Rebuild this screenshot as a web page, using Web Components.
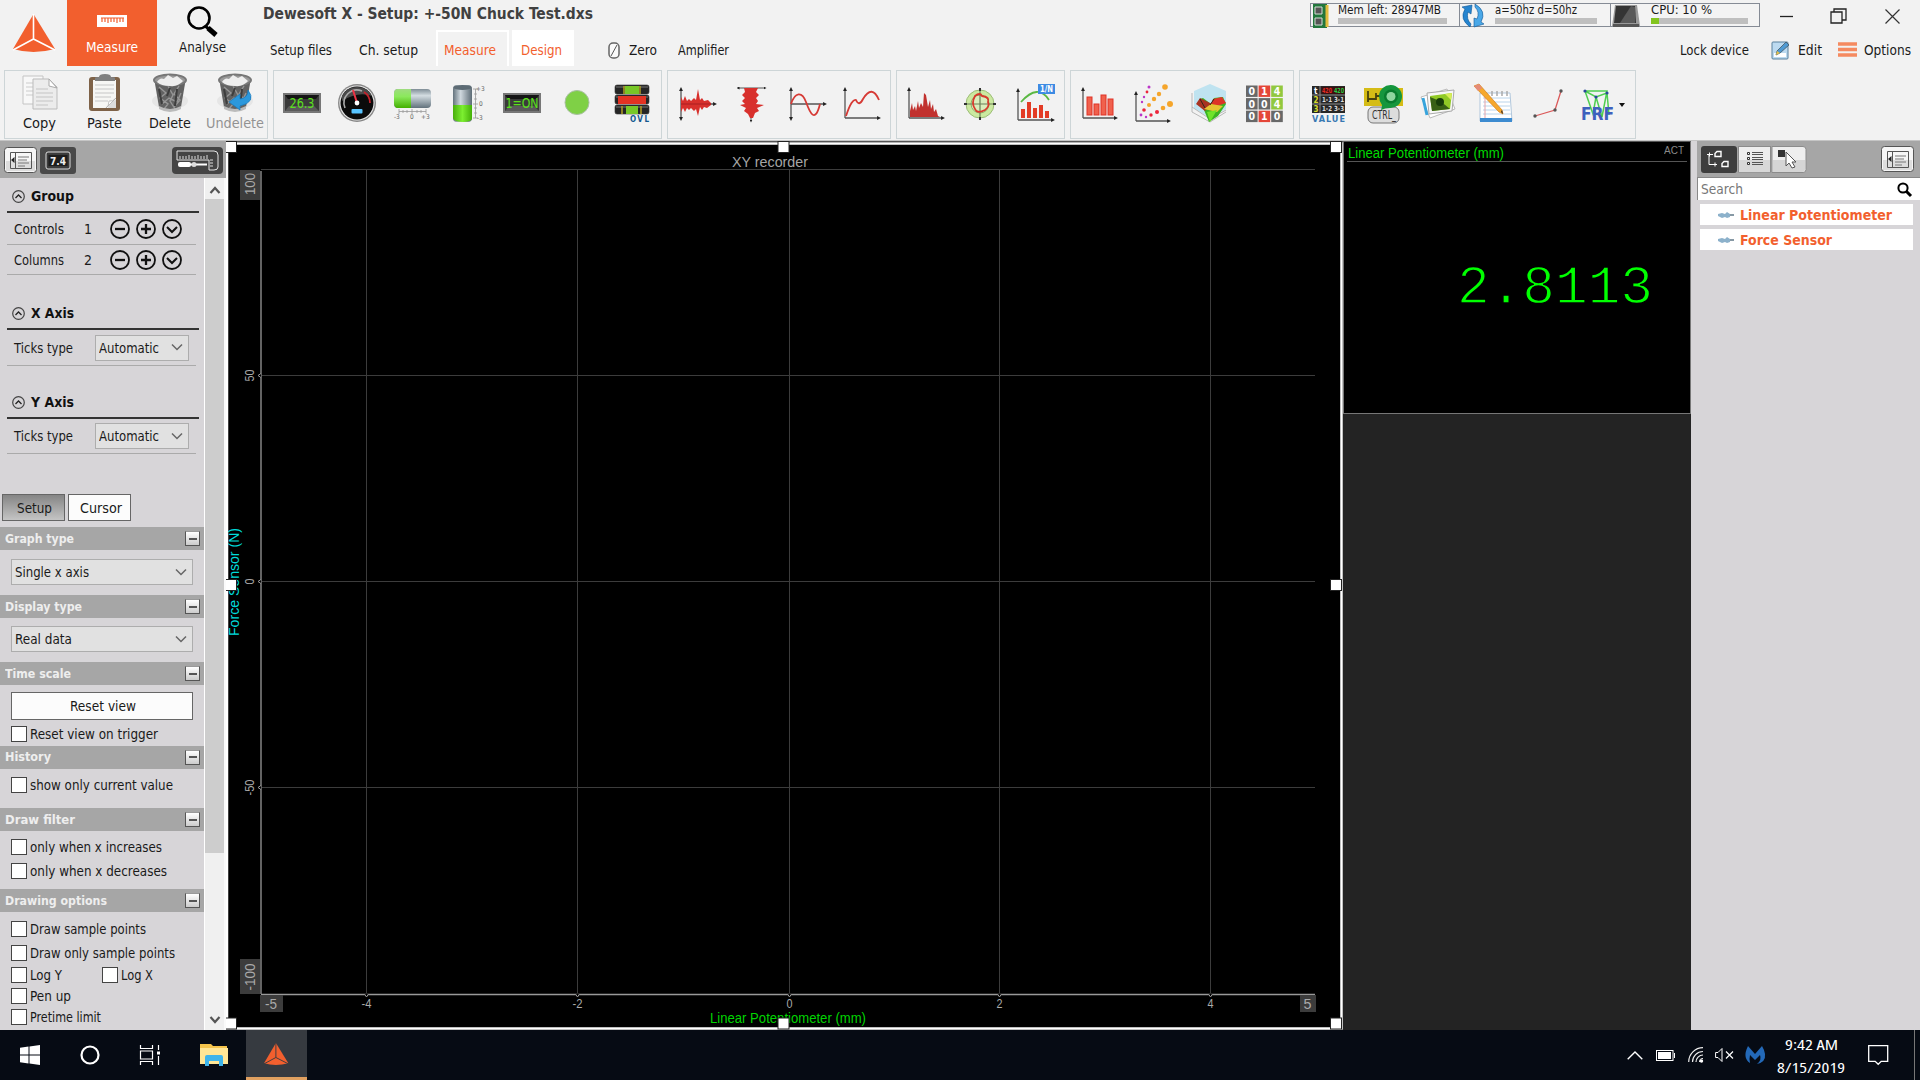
<!DOCTYPE html>
<html lang="en"><head><meta charset="utf-8"><title>Dewesoft X</title>
<style>
html,body{margin:0;width:1920px;height:1080px;overflow:hidden;background:#f2f2f2}
body{font:14px/16px "DejaVu Sans Condensed","DejaVu Sans",sans-serif;font-stretch:condensed;color:#1a1a1a}
dw-app{--orange:#f25f2e;--panel:#d7d5d8;--bar:#a6a6a6}
</style></head><body><dw-app></dw-app>
<script>
const arrow='<marker id="m" markerWidth="3" markerHeight="3" refX="1.5" refY="1.5" orient="auto-start-reverse"><path d="M0 0L3 1.5L0 3z" fill="#222"/></marker>';
const axes=(x,y1,y2,x2,mid)=>`<defs>${arrow}</defs><path d="M${x} ${y2}V${y1}" stroke="#555" stroke-width="1.3" marker-end="url(#m)"${mid?' marker-start="url(#m)"':''}/><path d="M${x} ${mid||y2}H${x2}" stroke="#555" stroke-width="1.3" marker-end="url(#m)"/>`;
const trash='<ellipse cx="20" cy="28" rx="18" ry="8" fill="#e6e6e6"/><path d="M4 5L9 34Q20 40 31 34L36 5z" fill="#626262"/><path d="M9 14l7 6-6 5 8 6-4 5M18 13l5 9-3 6 5 8M29 13l-5 8 6 6-6 7M12 31l7-6 8 4 4-9" stroke="#969696" fill="none" stroke-width="1.4"/><path d="M9 16l3 15M27 16l-2 17M20 15l-3 8" stroke="#3d3d3d" fill="none" stroke-width="2"/><ellipse cx="20" cy="7" rx="16" ry="5.5" fill="#999" stroke="#777" stroke-width="2"/><path d="M7 9q3-5 7-3l4-4 5 3 4-2 6 5q-5 6-13 5-9 0-13-4z" fill="#eee"/><path d="M9 33q11 6 22 0v3q-11 6-22 0z" fill="#bbb"/>';
const lcd=(t)=>`<rect x="3" y="12" width="38" height="20" fill="#3a3a3a"/><rect x="4" y="13" width="36" height="18" fill="none" stroke="#777" stroke-width="2"/><path d="M5 14h34l-3 4H8z" fill="#151515"/><path d="M5 30h34l-5-5H9z" fill="#5a5a5a"/><text x="22" y="27" text-anchor="middle" font-size="14" textLength="${t=='1=ON'?33:25}" lengthAdjust="spacingAndGlyphs" fill="#5be01c">${t}</text>`;
const grad='<linearGradient id="g1" x2="0" y2="1"><stop stop-color="#7f8d96"/><stop offset=".35" stop-color="#d4dde2"/><stop offset="1" stop-color="#61717c"/></linearGradient><linearGradient id="g2" x2="0" y2="1"><stop stop-color="#9fdc80"/><stop offset=".4" stop-color="#8be95c"/><stop offset="1" stop-color="#43b000"/></linearGradient><linearGradient id="g3"><stop stop-color="#64737d"/><stop offset=".4" stop-color="#cfd8de"/><stop offset="1" stop-color="#5d6c76"/></linearGradient><linearGradient id="g4"><stop stop-color="#49ae0c"/><stop offset=".5" stop-color="#7cef30"/><stop offset="1" stop-color="#45b008"/></linearGradient>';
const cells=()=>{const v='014004010';let s='';[...v].forEach((c,i)=>{const x=4+i%3*12.6,y=4.5+(i/3|0)*12.6,f=c=='0'?'#686868':c=='1'?'#e44638':'#92c83e';s+=`<rect x="${x}" y="${y}" width="11.6" height="11.4" fill="${f}"/><text x="${x+5.8}" y="${y+9.7}" text-anchor="middle" font-size="10.5" font-weight="bold" fill="#fff">${c}</text>`});return s};
const logo='<path d="M20.5 0L0 35Q20 41 42 35z" fill="#f25f2e"/><path d="M20.5 0V25L0 36M20.5 25L42 36" stroke="currentColor" fill="none" stroke-width="1.6"/>';
const I={
logo:[42,39,logo],
logoSmall:[42,39,logo],
ruler:[30,12,'<rect width="30" height="12" fill="#fff"/><path d="M5 3v4M8 3v4M11 3v5M14 3v4M17 3v4M20 3v5M23 3v4M26 3v4M4 3h23" stroke="#f25f2e" stroke-width="1.2"/>'],
lens:[32,32,'<circle cx="13" cy="12" r="10.5" fill="none" stroke="#000" stroke-width="2.6"/><path d="M19 20l4 3" stroke="#000" stroke-width="3"/><path d="M22 22l8 7" stroke="#000" stroke-width="5"/>'],
zero:[13,18,'<rect x="1" y="1" width="10" height="15" rx="4" fill="#fafafa" stroke="#666" stroke-width="1.5"/><path d="M9 3L3 14" stroke="#555"/>'],
copy:[36,36,'<path d="M1 1h20v4H14v24H1z" fill="#f8f8f8" stroke="#c4c4c4"/><path d="M4 8h9M4 12h9M4 16h9M4 20h9" stroke="#ccc"/><path d="M11 4h16l8 8v22H11z" fill="#ececec" stroke="#bbb"/><path d="M27 4l8 9-8-2z" fill="#fff" stroke="#aaa"/><path d="M14 14h12M14 18h17M14 22h17M14 26h17M14 30h12" stroke="#c4c4c4"/>'],
paste:[34,38,'<rect x="1" y="3" width="31" height="34" rx="3" fill="#7e6248"/><rect x="5" y="6" width="23" height="28" fill="#f6f6f4"/><path d="M7 11h19M7 15h19M7 19h19M7 23h16M7 27h13" stroke="#c6c6c6"/><path d="M20 34q0-7 8-8v8z" fill="#ddd"/><path d="M18 34q3-2 3-7 4 1 7-3z" fill="#fff" stroke="#aaa" stroke-width=".7"/><path d="M7 7V4q0-1 4-1 0-3 6-3t6 3q4 0 4 1v3z" fill="#808080"/>'],
trash:[40,39,trash],
untrash:[40,39,trash+'<path d="M33 17q9 12-8 16v4L14 29l11-8v5q8-1 8-9z" fill="#2b98dc" stroke="#1679bd" stroke-width=".7"/>'],
lcd:[44,44,lcd('26.3')],
on:[44,44,lcd('1=ON')],
gauge:[44,44,'<circle cx="22" cy="22" r="19" fill="#888"/><circle cx="22" cy="22" r="17.6" fill="#e9e9e9"/><circle cx="22" cy="22" r="16.5" fill="#0b0b0b"/><path d="M7 15A17 17 0 0 1 37 15Q23 10 7 20z" fill="#4a4a4a"/><path d="M10 27A13 13 0 0 1 27 10" fill="none" stroke="#aaa" stroke-width="1.6"/><path d="M29 11A13 13 0 0 1 35 22" fill="none" stroke="#c2222c" stroke-width="1.8"/><path d="M18 9L22 22" stroke="#e34" stroke-width="2"/><circle cx="22" cy="22" r="2.4" fill="#fff"/><rect x="16.500" y="28" width="11" height="4.600" rx="1" fill="#58c4ff"/>'],
hbar:[44,44,`<defs>${grad}</defs><rect x="4" y="8" width="37" height="19" rx="4" fill="url(#g1)"/><path d="M8 8h13v19H8q-4 0-4-5v-9q0-5 4-5z" fill="url(#g2)"/><path d="M9 30.500h27M9 28v5M13 29v3M17 29v3M22 28v5M27 29v3M31 29v3M36 28v5" stroke="#999" stroke-width=".8"/><text x="4" y="38" font-size="6.500" fill="#666">-3</text><text x="20" y="38" font-size="6.500" fill="#666">0</text><text x="31" y="38" font-size="6.500" fill="#666">+3</text>`],
vbar:[44,44,`<defs>${grad}</defs><rect x="8" y="4" width="19" height="37" rx="4" fill="url(#g3)"/><path d="M8 24h19v13q0 4-9 4t-10-4z" fill="url(#g4)"/><ellipse cx="17.500" cy="6.500" rx="9" ry="2.500" fill="#5d6b74"/><path d="M30.500 8v29M28 8h5M29 13h3M29 18h3M28 23h5M29 27h3M29 32h3M28 37h5" stroke="#999" stroke-width=".8"/><g font-size="6.500" fill="#666"><text x="31" y="10">+3</text><text x="34" y="25">0</text><text x="32" y="39">-3</text></g>`],
lamp:[44,44,'<circle cx="22" cy="21.500" r="12" fill="#7fd046" stroke="#a9bfa3"/>'],
ovl:[44,44,'<g stroke="#333" stroke-width=".6"><rect x="5" y="4" width="34" height="9" rx="2" fill="#252525"/><rect x="5" y="14" width="34" height="9" rx="2" fill="#252525"/><rect x="5" y="24" width="34" height="9" rx="2" fill="#252525"/></g><path d="M6 6h32M6 16h32M6 26h32" stroke="#777"/><rect x="15" y="5" width="14" height="8" fill="#78c727"/><rect x="8" y="15" width="28" height="8" fill="#e33323"/><rect x="16" y="25" width="12" height="8" fill="#78c727"/><path d="M14 5v8M30 5v8M12 25v8M31 25v8" stroke="#b29e25" stroke-width="1.5"/><text x="20" y="41" font-size="8" font-weight="bold" textLength="19" fill="#14588f">OVL</text>'],
wave:[44,44,axes(7,8,38,41,23)+'<path d="M7 16L9 20L11 15L13 20L15 18L17 20L20 17L22 19L24 8L26 19L28 17L30 20L34 19L37 22L37 24L33 27L30 26L28 29L26 26L24 35L22 28L20 30L17 27L15 29L13 27L11 31L9 27L7 31z" fill="#d8302c"/><path d="M7 23H37" stroke="#a91f21"/>'],
vwave:[44,44,'<defs>'+arrow+'</defs><path d="M9 7H36" stroke="#555" marker-start="url(#m)" marker-end="url(#m)"/><path d="M22 7V40" stroke="#555" marker-end="url(#m)"/><path d="M15 7h14l-2 4 3 3-3 3 2 3-2 3 8 1-7 3 2 3-4 2-2 5h-3l-2-4-4-3 2-3-6-3 5-1-3-3 3-3-3-3 3-3z" fill="#d8302c"/>'],
sine:[44,44,axes(7,8,38,41,23)+'<path d="M7 23C11 11 18 10 22 21S31 43 36 23" fill="none" stroke="#d63a35" stroke-width="1.8"/>'],
curve:[44,44,axes(6,8,37,40)+'<path d="M7 35Q13 17 17 19Q20 26 24 18Q33 3 40 19" fill="none" stroke="#d63a35" stroke-width="1.8"/>'],
fft:[44,44,axes(6,8,37,40)+'<path d="M7 36V30L9 22L10 29L12 25L13 30L15 20L16 27L18 22L20 26L21 12L23 14L25 26L27 19L28 28L30 23L31 31L33 28L35 35L37 36z" fill="#c1312e"/>'],
orbit:[44,44,'<circle cx="22" cy="23" r="14" fill="#cbe9a0" stroke="#9cbd78"/><circle cx="22" cy="23" r="9" fill="#daedbc" stroke="#8eac6b"/><path d="M22 8v30M7 23h30" stroke="#6c8058" stroke-width="1.200"/><path d="M17 15q5-4 7 0 8 1 6 6 2 4-3 8-8 4-10-1-4-6 0-13z" fill="none" stroke="#d73a2c" stroke-width="1.800"/><path d="M22 7v3M22 36v3M6 23h3M35 23h3" stroke="#333" stroke-width="2"/>'],
octave:[44,44,axes(5,9,39,40)+'<path d="M8 21Q25 2 36 19" fill="none" stroke="#5ab842" stroke-width="1.800"/><g fill="#e33c25"><rect x="8" y="28" width="4" height="9"/><rect x="14" y="21" width="4" height="16"/><rect x="20" y="27" width="4" height="10"/><rect x="26" y="24" width="4" height="13"/><rect x="32" y="30" width="4" height="7"/></g><rect x="25" y="3" width="17" height="10" fill="#3d8be3"/><text x="33.500" y="11" text-anchor="middle" font-size="8" font-weight="bold" textLength="13" lengthAdjust="spacingAndGlyphs" fill="#fff">1/N</text>'],
bars:[44,44,axes(6,8,37,39)+'<g fill="#f0614d" stroke="#df3327"><rect x="10" y="16" width="5" height="18"/><rect x="17" y="23" width="5" height="11"/><rect x="24" y="14" width="5" height="20"/><rect x="31" y="18" width="5" height="16"/></g>'],
scatter:[44,44,axes(4,12,40,37)+'<g fill="#f5a52b"><circle cx="33" cy="6" r="2.800"/><circle cx="27" cy="13" r="2.200"/><circle cx="22" cy="18" r="2.200"/><circle cx="17" cy="24" r="2"/><circle cx="38" cy="23" r="3"/><circle cx="31" cy="27" r="2.300"/></g><g fill="#ec263c"><circle cx="25" cy="31" r="2"/><circle cx="19" cy="34" r="1.700"/><circle cx="12" cy="29" r="1.800"/><circle cx="15" cy="11" r="1.400"/></g><g fill="#bc36c9"><circle cx="17" cy="6" r="1.500"/><circle cx="12" cy="16" r="1.200"/><circle cx="10" cy="21" r="1.200"/><circle cx="9" cy="34" r="1.400"/><circle cx="14" cy="36" r="1.200"/></g>'],
surf:[44,44,'<path d="M23 3L39 10V28L23 37L7 27V10z" fill="#bfe3f0"/><path d="M5 12V31L23 41L39 31M5 26l18 12 16-9" stroke="#aaa" stroke-width=".8" fill="none"/><path d="M13 18l3-1 8 6 3-6 9-1 3 7-8 12-9 6-5-12z" fill="#3bb423"/><path d="M13 17l12 6-7 7-9-7z" fill="#a93321"/><path d="M26 18l9-2 4 6-9 3-6-2z" fill="#dd3428"/><path d="M17 28l7-5 12 2-6 6z" fill="#e5c531"/><path d="M20 31l10-2-7 12z" fill="#6fe32b"/><path d="M13 18l5 9M27 18l-4 6" stroke="#35251b"/>'],
digits:[44,44,cells()],
value:[44,44,'<rect x="6" y="5" width="33" height="27" fill="#272727"/><path d="M6 14h33M6 23h33M14 5v27" stroke="#8c8c8c"/><rect x="15.500" y="6" width="23" height="7" fill="#3a1010"/><g font-size="8" font-weight="bold"><text x="8" y="13" fill="#fff">t</text><text x="7.500" y="22" fill="#d8db2c">2</text><text x="7.500" y="31" fill="#d8db2c">3</text><text x="16" y="12" fill="#e02b25" font-size="7" textLength="10" lengthAdjust="spacingAndGlyphs">420</text><text x="28" y="12" fill="#27c944" font-size="7" textLength="10" lengthAdjust="spacingAndGlyphs">420</text><text x="16" y="21" fill="#ddd" font-size="7" textLength="22" lengthAdjust="spacingAndGlyphs">1-1 3-1</text><text x="16" y="30" fill="#ddd" font-size="7" textLength="22" lengthAdjust="spacingAndGlyphs">1-2 3-3</text><text x="6" y="41" fill="#3878b2" font-size="9" textLength="33" lengthAdjust="spacing">VALUE</text></g>'],
ctrl:[44,44,'<rect x="3" y="7" width="39" height="18" fill="#d5bc16"/><path d="M7 10v11M7 18h8v-6M15 15h12" stroke="#49430c" stroke-width="1.800" fill="none"/><rect x="7" y="26" width="31" height="16" rx="5" fill="#ddd" stroke="#777"/><text x="11" y="38" font-size="12.500" textLength="24" lengthAdjust="spacingAndGlyphs" fill="#333">CTRL_</text><path d="M18 15a11.500 11.500 0 1 1 11 12q-5 0-9 2 1-3 1-5-3-4-3-9z" fill="#15963d"/><circle cx="30" cy="15.500" r="7" fill="#087c2e"/><circle cx="30" cy="15.500" r="4.500" fill="#8ed69f"/>'],
pics:[44,44,'<path d="M5 16l26-8 8 20-25 9z" fill="#fff" stroke="#bbb"/><path d="M7 17l4 17" stroke="#37a4dc" stroke-width="3"/><path d="M11 12l27-3-2 21-23 3z" fill="#f7f7f7" stroke="#aaa"/><path d="M14 15l22-3-2 16-18 2z" fill="#91ca26"/><path d="M14 16q10 3 20 12l-18 2z" fill="#386016"/><circle cx="24" cy="21" r="4" fill="#183d0a"/><path d="M29 13l7-1-1 7z" fill="#d8ed58"/>'],
note:[44,44,'<path d="M9 12h30l2 28H9z" fill="#fff" stroke="#b1c7dc"/><path d="M9 37h32v4H9z" fill="#3d8bd0"/><path d="M12 17h27M12 21h27M12 25h27M12 29h27M12 33h28" stroke="#b9d4eb"/><path d="M14 12v25" stroke="#e5a3aa"/><path d="M21 10v5M26 10v5M31 10v5M36 10v5" stroke="#aaa" stroke-width="1.500"/><path d="M3 5l5-2L31 29l1 4-4-2z" fill="#f6a82c" stroke="#d37e1a" stroke-width=".7"/><path d="M3 5l5-2 3 4-4 3z" fill="#e58b78"/><path d="M30 31l2 2-1-4z" fill="#222"/>'],
poly:[44,44,'<path d="M9 35L29 29L35 10" fill="none" stroke="#db5959" stroke-width="1.300"/><g fill="#555"><circle cx="9" cy="35" r="1.700"/><circle cx="29" cy="29" r="1.700"/><circle cx="35" cy="10" r="1.700"/></g>'],
frf:[44,44,'<path d="M4 10L15 16L26 12M4 10H26L21 36L15 16L12 33L4 10M26 12L28 34" fill="none" stroke="#50ce50" stroke-width="1.500"/><circle cx="4" cy="10" r="1.600" fill="#28479c"/><circle cx="26" cy="12" r="1.600" fill="#28479c"/><circle cx="15" cy="16" r="1.600" fill="#28479c"/><text x="0" y="39" font-size="17.500" font-weight="bold" textLength="33" lengthAdjust="spacingAndGlyphs" fill="#3e61bd">FRF</text><path d="M38 22h6l-3 4z"/>'],
mem:[20,24,'<rect x="2" width="14" height="24" fill="#22763c"/><path d="M16 1v22" stroke="#e2bc3f" stroke-width="3"/><path d="M4 3h7v7H4zM4 14h7v7H4z" fill="#555" stroke="#d4dfd4"/>'],
sync:[26,24,'<path d="M10 23Q-1 15 5 5L2 3l10-2-1 9-3-2Q6 15 11 20z" fill="#2584cf" stroke="#0d5596" stroke-width=".6"/><path d="M15 0Q27 7 21 18l3 2-10 3v-9l3 1q3-7-2-12z" fill="#4aa8e8" stroke="#0d5596" stroke-width=".6"/>'],
cpu:[28,24,'<path d="M1 22L4 1h22l3 21z" fill="#9a9a9a"/><path d="M5 2h19l1 17H3z" fill="#343434"/><path d="M20 2l4 1v16l-15 0z" fill="#5a5a5a"/><path d="M2 20h26v3H2z" fill="#555"/>'],
min:[13,3,'<path d="M0 1.500h13" stroke="#222" stroke-width="1.300"/>'],
restore:[17,16,'<path d="M1 4h11v11H1zM4 4V1h12v11h-4" fill="none" stroke="#222" stroke-width="1.300"/>'],
close:[15,15,'<path d="M.5 .5l14 14M14.500 .5l-14 14" stroke="#333" stroke-width="1.200"/>'],
edit:[19,19,'<rect x="1" y="1" width="16" height="17" rx="1" fill="#bcdaf0" stroke="#58809d"/><path d="M3 12h12v4H3z" fill="#fff"/><path d="M5 14l1-4 9-9 3 3-9 8z" fill="#4f9ad3" stroke="#3b4a54" stroke-width=".7"/><path d="M5 14l1-4 3 2z" fill="#e7c24a"/>'],
menu:[19,16,'<path d="M0 2h19M0 7.500h19M0 13h19" stroke="#f58a60" stroke-width="3.400"/>'],
panel:[34,27,'<rect x=".5" y=".5" width="32" height="25" rx="3" fill="#f6f6f6" stroke="#555" /><rect x="2" y="14" width="29" height="10" fill="#ddd"/><path d="M6.500 5.500h21v16h-21zM11.500 6v15" fill="none" stroke="#555"/><path d="M14 10h11M14 13h9M14 16h11M14 19h7" stroke="#777"/><path d="M10.500 10v6L7 13z" fill="#222"/>'],
seven:[36,27,'<rect width="36" height="27" rx="3" fill="#494949"/><rect x="6" y="5" width="24" height="17" rx="2" fill="#3b3b3b" stroke="#ddd"/><rect x="8.500" y="8" width="19" height="11" fill="#1d1d1d"/><text x="18" y="17.500" text-anchor="middle" font-size="11" font-weight="bold" textLength="16" lengthAdjust="spacingAndGlyphs" fill="#eee">7.4</text>'],
toolbox:[51,27,'<rect width="51" height="27" rx="4" fill="#444"/><path d="M5 4h37q4 0 4 4v12q0 3-4 3h-5V13H5z" fill="none" stroke="#e5e5e5"/><path d="M8 12V9M11 12V9M14 12V9M17 12V8M20 12V9M23 12V9M26 12V8M29 12V9M32 12V9M35 12V8M38 13h3M38 16h3M38 19h3" stroke="#ddd"/><rect x="6" y="15" width="13" height="5" rx="2" fill="#fff"/><path d="M19 17.500h16" stroke="#fff" stroke-width="2"/><circle cx="22" cy="17.500" r="2.500" fill="#ddd"/>'],
tree:[36,27,'<rect width="36" height="27" rx="3" fill="#3e3e3e"/><path d="M8 9v9.500h8M6 8.500h6M8.500 6.500v4M14 16.500v4" stroke="#fff" fill="none"/><path d="M14 10.500V7.500l2-2h4v5zM21 20.500v-3l2-2h4v5z" fill="none" stroke="#fff" stroke-width="1.400"/>'],
list:[33,27,'<rect x=".5" y=".5" width="32" height="25.500" fill="#eee" stroke="#8b8b8b"/><rect x="1" y="14" width="31" height="12" fill="#d8d8d8"/><path d="M14 6.500h11M14 8.500h11M14 11.500h11M14 13.500h11M14 16.500h11M14 18.500h11" stroke="#555"/><path d="M9.500 6.500h2v2h-2zM9.500 11.500h2v2h-2zM9.500 16.500h2v2h-2z" fill="#fff" stroke="#333"/>'],
pointer:[35,27,'<path d="M0 .5h31q3 0 3 3v20q0 3-3 3H0z" fill="#eee" stroke="#8b8b8b"/><path d="M1 14h32v9q0 3-3 3H1z" fill="#d5d5d5"/><rect x="6" y="4" width="7" height="7" fill="#333"/><path d="M14 6v14l3-3 3 5 3-1-3-5h4z" fill="#fff" stroke="#555"/>'],
find:[15,15,'<circle cx="6" cy="6" r="4.600" fill="none" stroke="#000" stroke-width="2"/><path d="M9 9l5 5" stroke="#000" stroke-width="3"/>'],
chan:[18,8,'<path d="M1 4h16" stroke="#8799a5" stroke-width="2"/><path d="M1 3l4-1 3 1 2-2 3 2v3l-3 1-2-1-3 1-4-2z" fill="#8cb1cb"/>'],
up:[13,13,'<circle cx="6.500" cy="6.500" r="5.800" fill="none" stroke="#444" stroke-width="1.200"/><path d="M3.500 8l3-3 3 3" fill="none" stroke="#222" stroke-width="1.300"/>'],
minus:[20,20,'<circle cx="10" cy="10" r="9" fill="none" stroke="#111" stroke-width="1.800"/><path d="M5 10h10" stroke="#111" stroke-width="2.300"/>'],
plus:[20,20,'<circle cx="10" cy="10" r="9" fill="none" stroke="#111" stroke-width="1.800"/><path d="M5 10h10M10 5v10" stroke="#111" stroke-width="2.300"/>'],
down:[20,20,'<circle cx="10" cy="10" r="9" fill="none" stroke="#111" stroke-width="1.800"/><path d="M5 8l5 5 5-5" fill="none" stroke="#111" stroke-width="2"/>'],
chev:[12,7,'<path d="M1 .5l5 5 5-5" fill="none" stroke="#666" stroke-width="1.500"/>'],
sup:[12,8,'<path d="M1.500 7L6 2l4.500 5" fill="none" stroke="#555" stroke-width="2.200"/>'],
sdown:[12,8,'<path d="M1.500 1L6 6l4.500-5" fill="none" stroke="#555" stroke-width="2.200"/>'],
win:[20,20,'<path d="M0 2.800L8.500 1.600V9.500H0zM9.500 1.500L20 0V9.500H9.500zM0 10.500H8.500V18.500L0 17.300zM9.500 10.500H20V20L9.500 18.600z" fill="#fff"/>'],
cortana:[20,20,'<circle cx="10" cy="10" r="8.500" fill="none" stroke="#fff" stroke-width="2.200"/>'],
task:[21,20,'<path d="M.5 0v3.500h12V0M.5 20v-3.500h12V20M.5 6h12v8H.5zM18.500 0v5M18.500 11v9" fill="none" stroke="#fff" stroke-width="1.200"/><path d="M17 6.500h3v3h-3z" fill="#fff"/>'],
folder:[28,24,'<path d="M0 1h11l2 2h14v18H0z" fill="#f4c44b"/><path d="M0 5h28v16H0z" fill="#ffe695"/><path d="M5 23V14q0-2 2-2h14q2 0 2 2v9h-4v-5H9v5z" fill="#3eb4ea"/>'],
tchev:[16,9,'<path d="M.7 8.300L8 1l7.300 7.300" fill="none" stroke="#fff" stroke-width="1.400"/>'],
batt:[19,11,'<rect x=".5" y=".5" width="16.500" height="10" fill="none" stroke="#fff"/><path d="M2 2h13v7H2zM18 3h1v5h-1z" fill="#fff"/>'],
wifi:[16,16,'<path d="M.7 15A14.300 14.300 0 0 1 15 .7M4.500 15A10.500 10.500 0 0 1 15 4.500M8 15a7 7 0 0 1 7-7" fill="none" stroke="#eee" stroke-width="1.200"/><path d="M11.500 15a3 3 0 0 1 3.500-3.500" fill="none" stroke="#eee"/><circle cx="13.500" cy="14" r="1.700" fill="#fff"/>'],
mute:[19,14,'<path d="M.6 4.500h2.400l4-4v13l-4-4H.6z" fill="none" stroke="#fff"/><path d="M11 3.500l7 7M18 3.500l-7 7" stroke="#fff" stroke-width="1.200"/>'],
mb:[20,18,'<path d="M3 0Q-3 12 5 17Q4 13 5 9l5 5 5-5q2 5-3 9 9-2 8-10Q19 3 17 0L10 8z" fill="#2369b8"/>'],
notif:[21,20,'<path d="M.7 .7h19v15.600h-6.500l-3 3-3-3H.7z" fill="none" stroke="#fff" stroke-width="1.300"/>']
};
const E=(name,css,html)=>customElements.define(name,class extends HTMLElement{
 connectedCallback(){if(this.shadowRoot)return;const r=this.attachShadow({mode:'open'});
 r.innerHTML=`<style>:host{display:block;box-sizing:border-box}*{box-sizing:border-box}${css}</style>`+(typeof html=='function'?html(this):html)}});
const T=(w,t,c='')=>`<fit-text w="${w}" class="${c}">${t}</fit-text>`;
const ic=(n,c='')=>`<dw-icon name="${n}" class="${c}"></dw-icon>`;

E('dw-app','',`<style>.main{display:flex;height:890px;border-top:1px solid #c5c5c5}</style><dw-header></dw-header><dw-toolbar></dw-toolbar><div class="main"><side-panel></side-panel><xy-recorder></xy-recorder><display-column></display-column><channel-panel></channel-panel></div><task-bar></task-bar>`);

E('dw-header',`:host{display:flex;height:66px;background:#f2f2f2}
.logo{width:67px;padding:14px 0 0 13px;color:#fff}.mode{width:90px;display:flex;flex-direction:column;align-items:center;height:66px}.m{background:var(--orange);color:#fff;padding-top:15px;gap:12px}.a{padding-top:6px;gap:1px}
.mid{margin-left:15px;width:600px}.title{padding:6px 0 0 1px;font-size:15px;font-weight:bold;color:#404040;height:30px}
.tabs{display:flex;height:36px}.tab{height:36px;padding-top:12px}.sel{border:2px solid #fff;border-bottom:0;color:var(--orange);padding-top:10px}.act{background:#fff;color:var(--orange)}
.right{margin-left:auto;width:612px}.top{display:flex;height:36px;padding:3px 0 0 2px}.win{display:flex;align-items:center;height:26px}.cmd{display:flex;align-items:center;height:28px;padding-left:372px}`,
`<div class="logo">${ic('logo')}</div><div class="mode m">${ic('ruler')}${T(52,'Measure')}</div><div class="mode a">${ic('lens')}${T(47,'Analyse')}</div>
<div class="mid"><div class="title">${T(330,'Dewesoft X - Setup: +-50N Chuck Test.dxs')}</div><div class="tabs">
<div class="tab" style="padding-left:8px;width:97px">${T(62,'Setup files')}</div><div class="tab" style="width:77px">${T(59,'Ch. setup')}</div>
<div class="tab sel" style="width:73px;padding-left:6px">${T(52,'Measure')}</div><div class="tab act" style="width:62px;margin-left:3px;padding-left:9px">${T(41,'Design')}</div>
<div class="tab" style="width:104px;padding:12px 0 0 34px;display:flex;gap:8px">${ic('zero')}${T(28,'Zero')}</div><div class="tab">${T(51,'Amplifier')}</div></div></div>
<div class="right"><div class="top"><status-box icon="mem" w="150" label="Mem left: 28947MB" tw="103" bar="109"></status-box><status-box icon="sync" w="152" label="a=50hz d=50hz" tw="82" bar="102" off="8"></status-box><status-box icon="cpu" w="150" label="CPU: 10 %" tw="61" bar="97" off="13" fill="8"></status-box>
<div class="win">${ic('min')}</div><div class="win" style="margin-left:37px">${ic('restore')}</div><div class="win" style="margin-left:38px">${ic('close')}</div></div>
<div class="cmd">${T(69,'Lock device')}<span style="width:22px"></span>${ic('edit')}<span style="width:8px"></span>${T(24,'Edit')}<span style="width:16px"></span>${ic('menu')}<span style="width:7px"></span>${T(47,'Options')}</div></div>`);

E('status-box',`:host{display:flex;height:24px;border:1.5px solid #858b95;margin-right:-1px;font-size:13px;line-height:12px;background:#f3f3f3}:host(:last-of-type){margin-right:20px}.i{width:27px}.b{height:6px;background:#bfbfbf;margin-top:2px}.f{height:6px;background:#82c41e}`,
e=>{const g=x=>e.getAttribute(x);e.style.width=g('w')+'px';return `<div class="i">${ic(g('icon'))}</div><div class="c" style="margin-left:${g('off')||0}px">${T(g('tw'),g('label'))}<div class="b" style="width:${g('bar')}px"><div class="f" style="width:${g('fill')||0}px"></div></div></div>`});

E('dw-toolbar',`:host{display:flex;height:74px;padding:4px 0 0 4px;gap:5px;background:#f2f2f2}`,
`<tool-group w="264"><div style="display:flex;padding:0 0 0 2px">`+[['copy','Copy',33,65,4],['paste','Paste',35,65,3],['trash','Delete',42,65,2],['untrash','Undelete',58,65,2]].map(a=>`<div style="width:${a[3]}px;height:65px;display:flex;flex-direction:column;align-items:center;padding-top:${a[4]}px;justify-content:space-between;padding-bottom:5px;${a[1]=='Undelete'?'color:#929292':''}">${ic(a[0])}${T(a[2],a[1])}</div>`).join('')+`</div></tool-group>`+
[[389,'lcd gauge hbar vbar on lamp ovl'],[224,'wave vwave sine curve'],[169,'fft orbit octave'],[224,'bars scatter surf digits'],[337,'value ctrl pics note poly frf']].map(g=>`<tool-group w="${g[0]}">${g[1].split(' ').map(n=>`<tool-button>${ic(n)}</tool-button>`).join('')}</tool-group>`).join(''));
E('tool-group',`:host{display:flex;height:69px;border:1.5px solid #cdd5d7}`,e=>{e.style.width=e.getAttribute('w')+'px';return '<slot></slot>'});
E('tool-button',`:host{width:55px;height:60px;padding:10px 0 0 6px;flex:none}`,'<slot></slot>');

E('side-panel',`:host{width:226px;display:flex;flex-direction:column;background:var(--panel);flex:none}
.bar{height:37px;background:var(--bar);display:flex;padding:6px 0 0 4px;gap:3px}.wrap{display:flex;height:852px}.body{width:204px}.scroll{width:22px;background:#f0f0f0;border-left:1px solid #fff;border-right:2px solid #fafafa;display:flex;flex-direction:column;align-items:center;justify-content:space-between;padding-bottom:6px}.thumb{width:19px;height:654px;background:#cdcdcd;margin-top:5px}
.row{display:flex;align-items:center;width:189px;height:30px;margin-left:7px;padding-left:7px;border-bottom:1px solid #aaa}.sp{flex:1}.btns{display:flex;gap:2px;padding-left:2px;margin-top:40px}.b{height:27px;border:1.5px solid #666;display:flex;align-items:center;justify-content:center;background:#fcfcfc;width:63px;padding-left:2px}.b.on{background:linear-gradient(#858585,#c4c4c4)}.reset{margin:7px 0 6px 11px;width:182px;height:28px}`,
`<div class="bar">${ic('panel')}<div style="margin-left:-1px">${ic('seven')}</div><span style="width:90px"></span>${ic('toolbox')}</div><div class="wrap"><div class="body">
<axis-head top="3" tw="43">Group</axis-head>
<div class="row" style="height:32px">${T(50,'Controls')}<span style="width:20px"></span>${T(8,'1')}<span style="width:18px"></span>${ic('minus')}<span style="width:6px"></span>${ic('plus')}<span style="width:6px"></span>${ic('down')}</div>
<div class="row">${T(50,'Columns')}<span style="width:20px"></span>${T(8,'2')}<span style="width:18px"></span>${ic('minus')}<span style="width:6px"></span>${ic('plus')}<span style="width:6px"></span>${ic('down')}</div>
<axis-head top="23" tw="43">X Axis</axis-head><div class="row" style="height:36px">${T(59,'Ticks type')}<span class="sp"></span><drop-down w="94" tw="60" style="margin-right:7px">Automatic</drop-down></div>
<axis-head top="21" tw="43">Y Axis</axis-head><div class="row" style="height:35px">${T(59,'Ticks type')}<span class="sp"></span><drop-down w="94" tw="60" style="margin-right:7px">Automatic</drop-down></div>
<div class="btns"><div class="b on">${T(35,'Setup')}</div><div class="b" style="margin-left:1px">${T(42,'Cursor')}</div></div>
<sec-head top="6" tw="69">Graph type</sec-head><drop-down w="182" tw="74" style="margin:9px 0 10px 11px">Single x axis</drop-down>
<sec-head top="0" tw="77">Display type</sec-head><drop-down w="182" tw="57" style="margin:8px 0 10px 11px">Real data</drop-down>
<sec-head top="0" tw="66">Time scale</sec-head><div class="b reset">${T(66,'Reset view')}</div><check-box tw="128">Reset view on trigger</check-box>
<sec-head top="3" tw="46">History</sec-head><check-box top="8" tw="143">show only current value</check-box>
<sec-head top="15" tw="70">Draw filter</sec-head><check-box top="8" tw="132">only when x increases</check-box><check-box top="7" tw="137">only when x decreases</check-box>
<sec-head top="10" tw="102">Drawing options</sec-head><check-box top="9" tw="116">Draw sample points</check-box><check-box top="7" tw="145">Draw only sample points</check-box>
<div style="display:flex"><check-box top="6" tw="32" style="width:91px">Log Y</check-box><check-box top="6" tw="32">Log X</check-box></div><check-box top="4" tw="41">Pen up</check-box><check-box top="5" tw="71">Pretime limit</check-box>
</div><div class="scroll"><div style="display:flex;flex-direction:column;align-items:center;padding-top:8px">${ic('sup')}<div class="thumb"></div></div>${ic('sdown')}</div></div>`);
E('axis-head',`:host{width:192px;margin-left:7px;height:32px;border-bottom:2px solid #333;display:flex;align-items:center;padding:0 0 0 5px;gap:6px;font-weight:bold;color:#111}`,e=>{e.style.marginTop=e.getAttribute('top')+'px';return ic('up')+T(e.getAttribute('tw'),e.textContent)});
E('sec-head',`:host{height:23px;background:var(--bar);color:#eee;font-weight:bold;display:flex;align-items:center;justify-content:space-between;padding:0 4px 0 5px;font-size:13px}.q{width:15px;height:15px;background:linear-gradient(#fff,#ccc);border:1px solid #555;border-top-color:#999;display:flex;align-items:center;justify-content:center}.q i{width:8px;height:2px;background:#555}`,e=>{e.style.marginTop=e.getAttribute('top')+'px';return T(e.getAttribute('tw'),e.textContent)+'<div class="q"><i></i></div>'});
E('drop-down',`:host{display:flex;height:26px;border:1.5px solid #adadad;background:#e1e1e1;align-items:center;justify-content:space-between;padding:0 5px 0 3px}`,e=>{e.style.width=e.getAttribute('w')+'px';return T(e.getAttribute('tw'),e.textContent)+ic('chev')});
E('check-box',`:host{display:flex;height:16.500px;padding-left:11px;gap:3px;align-items:center}i{width:16px;height:16px;border:1.500px solid #444;background:#fff;flex:none}`,e=>{e.style.marginTop=(e.getAttribute('top')||0)+'px';return '<i></i>'+T(e.getAttribute('tw'),e.textContent)});

const xs=[[366.5,-4],[577.5,-2],[789.5,0],[999.5,2],[1210.5,4]],ys=[[375.500,50],[581.500,0],[787.500,-50]];
const st=(x,y,w,t,f,s=12,r='')=>`<text x="${x}" y="${y}" text-anchor="middle" font-size="${s}" fill="${f}" textLength="${w}" lengthAdjust="spacingAndGlyphs" ${r}>${t}</text>`;
const vt=(x,y,w,t,f,s)=>st(0,0,w,t,f,s,`transform="translate(${x} ${y}) rotate(-90)"`);
E('xy-recorder',`:host{width:1117px;height:889px;background:#000;flex:none}svg{display:block;font-family:"Liberation Sans",sans-serif}`,
`<svg width="1117" height="889" viewBox="226 141 1117 889"><rect x="227" y="143.500" width="1114.500" height="885" fill="#000" stroke="#fff" stroke-width="2.500"/>
<path d="M226 142h1117" stroke="#aaa"/><path d="M261 169.500H1315${xs.map(a=>`M${a[0]} 170V993`).join('')}${ys.map(a=>`M262 ${a[0]}H1315`).join('')}" stroke="#3c3c3c" fill="none"/>
<path d="M261 171V994M261 994.500H1315" stroke="#999" stroke-width="1.300"/>
${xs.map(a=>`<path d="M${a[0]-2} 994l2 3 2-3" fill="#000" stroke="#999"/>`+st(a[0],1007.500,a[1]<0?10:6,a[1],'#aaa',12.500)).join('')}
${ys.map(a=>`<path d="M261 ${a[0]-2}l-3 2 3 2" fill="#000" stroke="#999"/>`+vt(254,a[0],a[1]<0?16:a[1]?12:6,a[1],'#aaa',12)).join('')}
<rect x="240" y="170" width="20" height="30" fill="#3c3c3c"/><rect x="240" y="959" width="20" height="35" fill="#3c3c3c"/><rect x="260" y="995" width="23" height="17" fill="#3c3c3c"/><rect x="1300" y="995" width="16" height="17" fill="#3c3c3c"/>
${vt(255,184,22,'100','#aaa',14)}${vt(255,977,27,'-100','#aaa',14)}${st(271,1009,12,'-5','#aaa',14)}${st(1307.5,1009,8,'5','#aaa',14)}
${st(770,166.500,76,'XY recorder','#a5a5a5',14.500)}${st(788,1022.500,156,'Linear Potentiometer (mm)','#00d400',14)}${vt(239,582,108,'Force Sensor (N)','#00dcdc',14)}
<g fill="#fff" stroke="#222">${[231,783.5,1336].map(x=>[147,585,1023.500].map(y=>x==783.5&&y==585?'':`<rect x="${x-5.500}" y="${y-5.500}" width="11" height="11"/>`).join('')).join('')}</g></svg>`);

E('display-column',`:host{width:354px;height:889px;border-right:6px solid var(--panel);background:#232323;flex:none}.d{width:348px;height:273px;background:#000;border:1.500px solid #777;border-top-color:#555;font-family:"Liberation Sans",sans-serif;display:flex;flex-direction:column}.h{display:flex;justify-content:space-between;height:20px;margin:0 3px;padding:0 3px 0 1px;border-bottom:1.500px solid #555;color:#00dc00}.a{color:#888;font-size:11.500px}.h fit-text:first-child{margin-top:3px}.v{font:54.300px/60px "Liberation Mono",monospace;color:#0f0;-webkit-text-stroke:1.400px #000;align-self:flex-end;margin:97px 37px 0 0}`,
`<div class="d"><div class="h">${T(156,'Linear Potentiometer (mm)')}${T(20,'ACT','a')}</div><div class="v">${T(196,'2.8113')}</div></div>`);

E('channel-panel',`:host{width:223px;height:889px;background:var(--panel)}.bar{height:36px;background:var(--bar);display:flex;gap:1px;padding:5px 5px 0 4px}.s{height:23px;background:#fff;border-left:1.500px solid #888;border-top:1.500px solid #888;display:flex;align-items:center;justify-content:space-between;padding:0 8px 0 3px;color:#777;margin-bottom:4px}.r{width:213px;height:21px;background:#fff;margin:0 0 4px 3px;padding-left:17px;display:flex;align-items:center;gap:5px;color:var(--orange);font-weight:bold}`,
`<div class="bar">${ic('tree')}${ic('list')}${ic('pointer')}<span style="flex:1"></span>${ic('panel')}</div><div class="s">${T(42,'Search')}${ic('find')}</div><div class="r">${ic('chan')}${T(152,'Linear Potentiometer')}</div><div class="r">${ic('chan')}${T(92,'Force Sensor')}</div>`);

E('task-bar',`:host{display:flex;align-items:center;width:1920px;height:50px;background:#060b14;color:#fff;font-family:"Open Sans","Noto Sans",sans-serif;font-size:15px}.act{width:61px;height:50px;background:#363a40;border-bottom:3px solid #e0a060;padding:13px 0 0 18px;margin-left:18px;color:#363a40}.t{width:70px;display:flex;flex-direction:column;align-items:center;gap:7px;margin-left:11px}.e{height:50px;border-left:1px solid #777;width:6px;margin-left:25px}`,
`<span style="width:20px"></span>${ic('win')}<span style="width:40px"></span>${ic('cortana')}<span style="width:40px"></span>${ic('task')}<span style="width:39px"></span>${ic('folder')}<div class="act">${ic('logoSmall')}</div><span style="flex:1"></span>${ic('tchev')}<span style="width:13px"></span>${ic('batt')}<span style="width:13px"></span>${ic('wifi')}<span style="width:11px"></span>${ic('mute')}<span style="width:11px"></span>${ic('mb')}<div class="t">${T(53,'9:42 AM')}${T(68,'8/15/2019')}</div><span style="width:22px"></span>${ic('notif')}<div class="e"></div>`);

E('dw-icon',`:host{flex:none}svg{display:block;overflow:visible;font-family:"DejaVu Sans Condensed","DejaVu Sans",sans-serif}`,e=>{const n=e.getAttribute('name'),[w,h,s]=I[n],k=n=='logoSmall'?.58:1;return `<svg width="${w*k}" height="${h*k}" viewBox="0 0 ${w} ${h}" fill="#111">${s}</svg>`});

/* Sets a label at a fixed width by scaling its glyphs horizontally. */
customElements.define('fit-text',class extends HTMLElement{
 connectedCallback(){if(this.shadowRoot)return;const w=+this.getAttribute('w');this.attachShadow({mode:'open'}).innerHTML=`<style>:host{display:block;flex:none;white-space:nowrap;width:${w}px}span{display:inline-block;transform-origin:0 50%}</style><span><slot></slot></span>`;
 const s=this.shadowRoot.querySelector('span'),r=s.getBoundingClientRect().width;if(r)s.style.transform=`scaleX(${w/r})`}});
</script></body></html>
